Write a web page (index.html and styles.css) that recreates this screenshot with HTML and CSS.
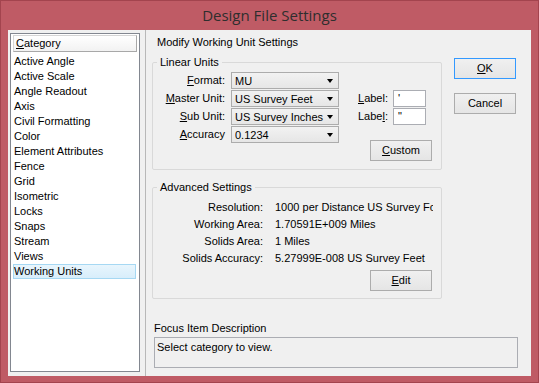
FILE: index.html
```html
<!DOCTYPE html>
<html>
<head>
<meta charset="utf-8">
<title>Design File Settings</title>
<link rel="stylesheet" href="styles.css">
</head>
<body>
<div class="window">
  <div class="titlebar">Design File Settings</div>
  <div class="client">
    <div class="left">
      <div class="listbox">
        <div class="list-header"><u>C</u>ategory</div>
        <div class="items">
          <div class="item">Active Angle</div>
          <div class="item">Active Scale</div>
          <div class="item">Angle Readout</div>
          <div class="item">Axis</div>
          <div class="item">Civil Formatting</div>
          <div class="item">Color</div>
          <div class="item">Element Attributes</div>
          <div class="item">Fence</div>
          <div class="item">Grid</div>
          <div class="item">Isometric</div>
          <div class="item">Locks</div>
          <div class="item">Snaps</div>
          <div class="item">Stream</div>
          <div class="item">Views</div>
          <div class="item selected">Working Units</div>
        </div>
      </div>
    </div>
    <div class="splitter"></div>
    <div class="right">
      <div class="top">
        <div class="main">
          <div class="heading">Modify Working Unit Settings</div>
          <fieldset class="group linear">
            <legend>Linear Units</legend>
            <div class="unit-grid">
              <span class="lbl"><u>F</u>ormat:</span>
              <div class="combo"><span class="combo-text">MU</span><span class="arrow"></span></div>
              <span></span><span></span>

              <span class="lbl"><u>M</u>aster Unit:</span>
              <div class="combo"><span class="combo-text">US Survey Feet</span><span class="arrow"></span></div>
              <span class="lbl2"><u>L</u>abel:</span>
              <div class="textbox">'</div>

              <span class="lbl"><u>S</u>ub Unit:</span>
              <div class="combo"><span class="combo-text">US Survey Inches</span><span class="arrow"></span></div>
              <span class="lbl2">Labe<u>l</u>:</span>
              <div class="textbox">"</div>

              <span class="lbl"><u>A</u>ccuracy</span>
              <div class="combo"><span class="combo-text">0.1234</span><span class="arrow"></span></div>
              <span></span><span></span>
            </div>
            <div class="btn-row custom-row">
              <div class="btn"><u>C</u>ustom</div>
            </div>
          </fieldset>
          <fieldset class="group advanced">
            <legend>Advanced Settings</legend>
            <div class="adv-grid">
              <span class="lbl">Resolution:</span><span class="val">1000 per Distance US Survey Foot</span>
              <span class="lbl">Working Area:</span><span class="val">1.70591E+009 Miles</span>
              <span class="lbl">Solids Area:</span><span class="val">1 Miles</span>
              <span class="lbl">Solids Accuracy:</span><span class="val">5.27999E-008 US Survey Feet</span>
            </div>
            <div class="btn-row edit-row">
              <div class="btn"><u>E</u>dit</div>
            </div>
          </fieldset>
        </div>
        <div class="buttons">
          <div class="btn default"><u>O</u>K</div>
          <div class="btn">Cancel</div>
        </div>
      </div>
      <div class="focus">
        <div class="focus-label">Focus Item Description</div>
        <div class="focus-box">Select category to view.</div>
      </div>
    </div>
  </div>
</div>
</body>
</html>
```
FILE: styles.css
```css
* { box-sizing: border-box; }

html, body {
  margin: 0;
  padding: 0;
}

body {
  width: 539px;
  height: 383px;
  overflow: hidden;
  font-family: "Liberation Sans", Arial, sans-serif;
  font-size: 11px;
  color: #000;
}

.window {
  width: 539px;
  height: 383px;
  background: #bf5b65;
  border: 1px solid #a3444e;
  display: flex;
  flex-direction: column;
}

.titlebar {
  height: 29px;
  line-height: 29px;
  text-align: center;
  font-family: "Open Sans", "Noto Sans", sans-serif;
  font-size: 15px;
  color: #2e2e2e;
}

.client {
  margin: 0 7px;
  height: 346px;
  background: #f0f0f0;
  display: flex;
}

.left {
  padding: 3px 0 4px 2px;
}

.listbox {
  width: 130px;
  height: 339px;
  border: 1px solid #828790;
  background: #fff;
  padding: 1px 2px 0 2px;
}

.list-header {
  height: 17px;
  line-height: 15px;
  padding-left: 2px;
  background: linear-gradient(#ffffff, #f2f2f2);
  border: 1px solid #d5d5d5;
  border-right-color: #a8a8a8;
  border-bottom-color: #a8a8a8;
}

.items {
  margin-top: 2px;
}

.item {
  height: 15px;
  line-height: 13px;
  border: 1px solid transparent;
  padding-left: 0;
  white-space: nowrap;
}

.item.selected {
  width: 123px;
  background: linear-gradient(#e8f5fd, #d8eefb);
  border-color: #a6d8f3;
}

.splitter {
  margin-left: 5px;
  width: 1px;
  background: #b8b8b8;
}

.right {
  flex: 1;
  padding-left: 6px;
  display: flex;
  flex-direction: column;
}

.top {
  display: flex;
}

.main {
  width: 290px;
}

.heading {
  padding: 5px 0 0 5px;
  line-height: 14px;
}

.group {
  margin: 0;
  min-width: 0;
  border: 1px solid #d9d9d9;
  border-radius: 2px;
}

.group legend {
  margin-left: 4px;
  padding: 0 3px;
  line-height: 14px;
}

.linear {
  margin-top: 6px;
  padding: 3px 0 8px 0;
}

.unit-grid {
  display: grid;
  grid-template-columns: 78px 127px 35px 33px;
  grid-auto-rows: 18px;
}

.lbl {
  text-align: right;
  padding-right: 6px;
  line-height: 17px;
  white-space: nowrap;
}

.lbl2 {
  line-height: 17px;
  white-space: nowrap;
}

.combo {
  width: 108px;
  height: 17px;
  display: flex;
  align-items: center;
  border: 1px solid #acacac;
  background: linear-gradient(#f2f2f2, #e6e6e6);
  padding: 0 5px 0 3px;
}

.combo-text {
  flex: 1;
  white-space: nowrap;
  overflow: hidden;
}

.arrow {
  width: 0;
  height: 0;
  border-left: 3.5px solid transparent;
  border-right: 3.5px solid transparent;
  border-top: 4px solid #000;
}

.textbox {
  height: 17px;
  border: 1px solid #abadb3;
  background: #fff;
  padding-left: 4px;
  line-height: 15px;
}

.btn-row {
  display: flex;
  justify-content: flex-end;
  padding-right: 9px;
}

.custom-row {
  margin-top: -4px;
}

.btn {
  width: 62px;
  height: 21px;
  line-height: 19px;
  text-align: center;
  border: 1px solid #acacac;
  background: linear-gradient(#f0f0f0, #e5e5e5);
}

.btn.default {
  border-color: #3399ff;
}

.advanced {
  margin-top: 10px;
  padding: 5px 0 7px 0;
}

.adv-grid {
  display: grid;
  grid-template-columns: 110px 158px;
  column-gap: 12px;
  grid-auto-rows: 17px;
}

.adv-grid .lbl {
  padding-right: 0;
}

.val {
  line-height: 17px;
  white-space: nowrap;
  overflow: hidden;
}

.edit-row {
  margin-top: 3px;
}

.buttons {
  margin-left: 12px;
  padding-top: 28px;
  width: 62px;
  display: flex;
  flex-direction: column;
  gap: 14px;
}

.buttons .btn {
  height: 21px;
}

.focus {
  margin-left: 2px;
  margin-top: 22px;
}

.focus-label {
  line-height: 14px;
}

.focus-box {
  margin-top: 2px;
  width: 364px;
  height: 31px;
  border: 1px solid #abadb3;
  background: #f0f0f0;
  padding: 2px 0 0 2px;
  line-height: 14px;
}
```
